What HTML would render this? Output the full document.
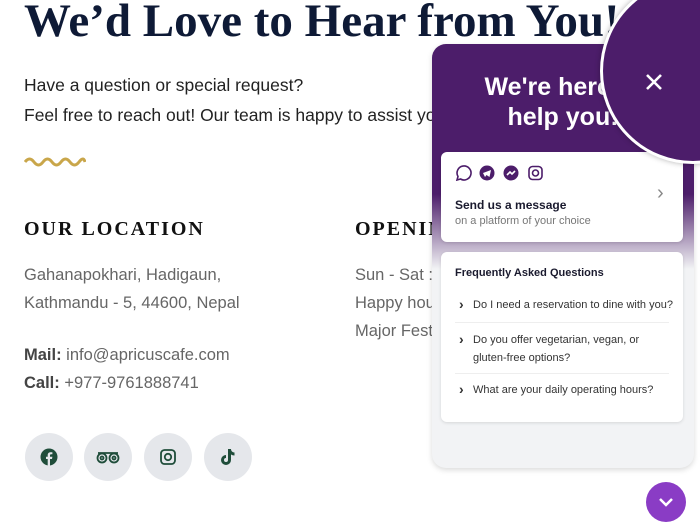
<!DOCTYPE html><html><head><style>
body{margin:0;width:700px;height:531px;overflow:hidden;background:#fff;font-family:"Liberation Sans",sans-serif;position:relative}
.a{position:absolute;white-space:nowrap}
h1{position:absolute;left:24px;top:-6px;margin:0;font:600 47px "Liberation Serif",serif;color:#0e1a36;white-space:nowrap}
.p{font-size:17.5px;color:#222}
.g{font-size:16.5px;color:#666}
.h{font:600 20px "Liberation Serif",serif;letter-spacing:2px;color:#111}
.ic{position:absolute;top:433px;width:48px;height:48px;border-radius:50%;background:#e5e7eb;display:flex;align-items:center;justify-content:center}
.w{position:absolute;left:432px;top:44px;width:262px;height:424px;border-radius:14px;background:#f2f3f5;overflow:hidden;box-shadow:0 2px 6px rgba(0,0,0,.15)}
.top{position:absolute;left:0;top:0;width:100%;height:225px;background:linear-gradient(#4c1d6a 0,#4c1d6a 150px,#f2f3f5 225px)}
.card{position:absolute;left:9px;background:#fff;border-radius:6px;width:242px;box-shadow:0 1px 3px rgba(0,0,0,.12)}
.q{font-size:11px;color:#333;padding:0 0 0 32px;position:relative;line-height:18px}
.q:before{content:"›";position:absolute;left:18px;top:-1px;font-weight:bold;font-size:14px}
</style></head><body>
<h1>We’d Love to Hear from You!</h1>
<div class="a p" style="left:24px;top:75px">Have a question or special request?</div>
<div class="a p" style="left:24px;top:105px">Feel free to reach out! Our team is happy to assist you.</div>
<svg class="a" style="left:24px;top:156px" width="62" height="12"><path d="M1 6 q4.5 -6 9 0 t9 0 t9 0 t9 0 t9 0 t9 0 t6 0" fill="none" stroke="#c9a64a" stroke-width="3"/></svg>
<div class="a h" style="left:24px;top:218px">OUR LOCATION</div>
<div class="a h" style="left:355px;top:218px">OPENING HOURS</div>
<div class="a g" style="left:24px;top:266px">Gahanapokhari, Hadigaun,</div>
<div class="a g" style="left:24px;top:294px">Kathmandu - 5, 44600, Nepal</div>
<div class="a g" style="left:355px;top:266px">Sun - Sat : 7am - 9pm</div>
<div class="a g" style="left:355px;top:294px">Happy hours</div>
<div class="a g" style="left:355px;top:322px">Major Festivals</div>
<div class="a g" style="left:24px;top:346px"><b style="color:#444">Mail:</b> info@apricuscafe.com</div>
<div class="a g" style="left:24px;top:374px"><b style="color:#444">Call:</b> +977-9761888741</div>
<div class="ic" style="left:25px"><svg width="18" height="18" viewBox="0 0 18 18"><circle cx="9" cy="9" r="8.5" fill="#1f4d3a"/><path d="M10 18V11h2l.4-2.3H10V7.4c0-.7.3-1.1 1.1-1.1h1.3V4.3c-.4 0-1.1-.1-1.8-.1-1.9 0-2.9 1.1-2.9 3v1.5H6V11h1.7v7z" fill="#e5e7eb"/></svg></div>
<div class="ic" style="left:84px"><svg width="24" height="14" viewBox="0 0 24 14" fill="none" stroke="#1f4d3a" stroke-width="1.8"><circle cx="6" cy="8" r="4.5"/><circle cx="18" cy="8" r="4.5"/><circle cx="6" cy="8" r="1.5"/><circle cx="18" cy="8" r="1.5"/><path d="M2 3h20"/></svg></div>
<div class="ic" style="left:144px"><svg width="16" height="16" viewBox="0 0 16 16" fill="none" stroke="#1f4d3a" stroke-width="1.8"><rect x="1" y="1" width="14" height="14" rx="3.5"/><circle cx="8" cy="8" r="3.2"/></svg></div>
<div class="ic" style="left:204px"><svg width="16" height="18" viewBox="0 0 16 18"><path d="M8 1h3c0 2 1.5 3.5 3.5 3.5v3c-1.4 0-2.6-.4-3.5-1.1V12a5 5 0 1 1-5-5v3a2 2 0 1 0 2 2z" fill="#1f4d3a"/></svg></div>
<div class="w"><div class="top"></div>
<div class="a" style="left:0;width:262px;top:28px;text-align:center;color:#fff;font:bold 25px/30px 'Liberation Sans',sans-serif">We're here to<br>help you!</div>
<div class="card" style="top:108px;height:90px">
<svg class="a" style="left:14px;top:13px" width="90" height="16" viewBox="0 0 90 16" fill="none" stroke="#4c1d6a" stroke-width="1.6"><path d="M2 15l1-3.5A7 7 0 1 1 5.5 14z"/><circle cx="32" cy="8" r="7.5" fill="#4c1d6a" stroke="none"/><path d="M28 8l8-3-1.5 7-3-2-1.5 2z" fill="#fff" stroke="none"/><circle cx="56" cy="8" r="7.5" fill="#4c1d6a" stroke="none"/><path d="M52 10l3-3 2 2 3-3" stroke="#fff"/><rect x="74" y="1.5" width="13" height="13" rx="3.5"/><circle cx="80.5" cy="8" r="3"/></svg>
<div class="a" style="left:14px;top:46px;font-size:12px;font-weight:bold;color:#1a1a2e">Send us a message</div>
<div class="a" style="left:14px;top:63px;font-size:11px;color:#777">on a platform of your choice</div>
<div class="a" style="left:216px;top:30px;font-size:20px;color:#888">›</div>
</div>
<div class="card" style="top:208px;height:170px">
<div class="a" style="left:14px;top:15px;font-size:11px;font-weight:bold;color:#1a1a2e">Frequently Asked Questions</div>
<div class="a" style="left:0;top:44px;width:242px"><div class="q">Do I need a reservation to dine with you?</div></div>
<div class="a" style="left:14px;top:70px;width:214px;border-top:1px solid #eee"></div>
<div class="a" style="left:0;top:79px;width:242px;white-space:normal"><div class="q">Do you offer vegetarian, vegan, or<br>gluten-free options?</div></div>
<div class="a" style="left:14px;top:121px;width:214px;border-top:1px solid #eee"></div>
<div class="a" style="left:0;top:129px;width:242px"><div class="q">What are your daily operating hours?</div></div>
</div></div>
<div class="a" style="left:600px;top:-22px;width:180px;height:180px;border-radius:50%;background:#4c1d6a;border:3px solid #fff;box-shadow:0 0 6px rgba(0,0,0,.3)"></div>
<svg class="a" style="left:645px;top:73px" width="18" height="18"><path d="M2 2l14 14M16 2L2 16" stroke="#fff" stroke-width="2.6"/></svg>
<div class="a" style="left:646px;top:482px;width:40px;height:40px;border-radius:50%;background:#8a3cc5"></div>
<svg class="a" style="left:658px;top:496px" width="16" height="12"><path d="M2 3l6 6 6-6" fill="none" stroke="#fff" stroke-width="2.5"/></svg>
</body></html>
